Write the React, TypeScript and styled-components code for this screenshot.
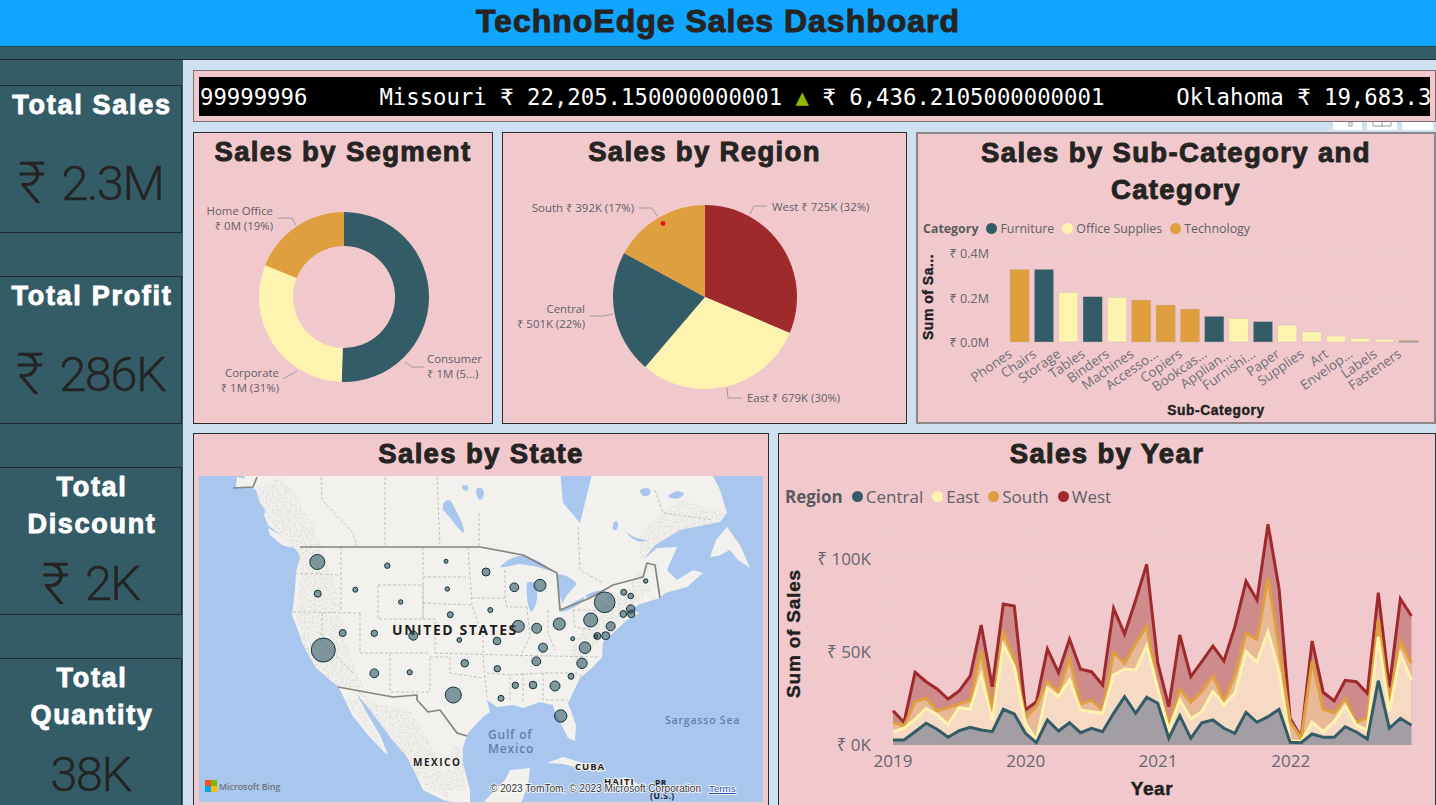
import React from "react";
import styled, { createGlobalStyle } from "styled-components";

const TEAL = "#335c67";
const YELLOW = "#fff3b0";
const ORANGE = "#e09f3e";
const RED = "#9e2a2b";
const PINK = "#f1c9cd";
const UI = '"Open Sans", "Noto Sans", sans-serif';
const HEAVY = '"Liberation Sans", Arial, sans-serif';

const Global = createGlobalStyle`
  html, body { margin: 0; padding: 0; background: #cfe0f0; }
  * { box-sizing: border-box; }
`;

const Page = styled.div`
  width: 1436px; height: 805px; overflow: hidden;
  display: flex; flex-direction: column; background: #cfe0f0;
`;
const Header = styled.header`
  height: 46px; flex: none; background: #10a5fe; padding-bottom: 3px;
  display: flex; align-items: center; justify-content: center;
  font: 700 32px ${HEAVY}; color: #252423;
  -webkit-text-stroke: 1px #252423; letter-spacing: 1px;
`;
const Band = styled.div`
  height: 14px; flex: none; background: ${TEAL};
  border-top: 1px solid #2c4a54; border-bottom: 1px solid #1e2f35;
`;
const Body = styled.div`flex: 1; min-height: 0; display: flex;`;
const Sidebar = styled.aside`
  width: 183px; flex: none; background: ${TEAL};
  padding-top: 25px; display: flex; flex-direction: column; gap: 43px;
  overflow: hidden; border-right: 1px solid #3d5f69;
`;
const KpiCard = styled.section`
  height: 148px; flex: none; display: flex; flex-direction: column;
  border-top: 1px solid #1c2e33; border-bottom: 1px solid #1c2e33; border-right: 1px solid #1c2e33;
  padding-top: 1px;
`;
const KpiTitle = styled.h2`
  margin: 0; padding-left: 3px; text-align: center; color: #fff;
  font: 700 27px/37px ${HEAVY}; -webkit-text-stroke: 0.9px #fff; letter-spacing: 1.7px;
`;
const KpiValue = styled.div`
  flex: 1; display: flex; align-items: center; justify-content: center; gap: 15px; padding-top: 10px;
  font: 300 49px Roboto, "Noto Sans", sans-serif; color: #252423; white-space: pre; letter-spacing: -1.6px;
  -webkit-text-stroke: 0.35px #252423;
`;
const Rupee = styled.span`font-size: 58px; line-height: 50px; letter-spacing: 0; -webkit-text-stroke: 0;`;
const Main = styled.main`
  flex: 1; min-width: 0; position: relative; padding: 10px 0 0 10px;
  display: flex; flex-direction: column; gap: 10px;
`;
const TickerPanel = styled.div`
  height: 52px; flex: none; background: ${PINK};
  border: 1px solid #7d6f76; padding: 6px 5px 5px 5px;
`;
const TickerTrack = styled.div`
  height: 100%; background: #000; color: #fff; overflow: hidden;
  display: flex; align-items: center; gap: 72px; padding-left: 1px; white-space: pre;
  font: 400 22.3px "DejaVu Sans Mono", "Liberation Mono", monospace;
`;
const TickerItem = styled.span`flex: none;`;
const Up = styled.span`color: #8fb800;`;
const TabStrip = styled.div`
  position: absolute; left: 1150px; top: 62px; display: flex; gap: 5px;
`;
const Tab = styled.div<{ $w: number }>`
  width: ${(p) => p.$w}px; height: 8px; background: #fff; display: flex; justify-content: center;
`;
const TopRow = styled.div`
  height: 292px; flex: none; display: grid; grid-template-columns: 300px 405px 520px; column-gap: 9px;
  margin-bottom: -1px;
`;
const BottomRow = styled.div`
  height: 380px; flex: none; display: grid; grid-template-columns: 576px 658px; column-gap: 9px;
`;
const Panel = styled.section<{ $soft?: boolean }>`
  background: ${PINK}; min-width: 0; overflow: hidden; display: flex; flex-direction: column;
  border: ${(p) => (p.$soft ? "2px solid #8d8589" : "1px solid #2d2d33")};
`;
const Title = styled.h3<{ $lh?: number }>`
  margin: 0; flex: none; text-align: center; color: #252423;
  font: 700 27.5px/${(p) => p.$lh ?? 37}px ${HEAVY};
  -webkit-text-stroke: 0.95px #252423; letter-spacing: 1.35px;
`;
const Legend = styled.div<{ $size: number; $gap: number; $h: number; $mt: number; $pl: number }>`
  flex: none; display: flex; align-items: center; height: ${(p) => p.$h}px;
  margin-top: ${(p) => p.$mt}px; padding-left: ${(p) => p.$pl}px; gap: ${(p) => p.$gap}px;
  font: 400 ${(p) => p.$size}px ${UI}; color: #5f6069;
`;
const LegendHead = styled.span`font-weight: 700; color: #5a5a5f;`;
const LegendItem = styled.span`display: inline-flex; align-items: center; gap: 3px;`;
const Dot = styled.i<{ $c: string; $d: number }>`
  display: block; width: ${(p) => p.$d}px; height: ${(p) => p.$d}px; border-radius: 50%; background: ${(p) => p.$c};
`;
const ChartSvg = styled.svg`display: block; flex: none; font-family: ${UI};`;
const MapFrame = styled.div`
  flex: none; width: 564px; height: 326px; margin: 2px 5px 0; background: #a9c6ef; overflow: hidden;
`;

function wedge(cx: number, cy: number, r: number, r0: number, a: number, b: number) {
  const p = (rad: number, t: number) => {
    const x = cx + rad * Math.sin((t * Math.PI) / 180);
    const y = cy - rad * Math.cos((t * Math.PI) / 180);
    return `${x.toFixed(2)} ${y.toFixed(2)}`;
  };
  const large = b - a > 180 ? 1 : 0;
  if (r0 === 0) return `M${cx} ${cy}L${p(r, a)}A${r} ${r} 0 ${large} 1 ${p(r, b)}Z`;
  return `M${p(r, a)}A${r} ${r} 0 ${large} 1 ${p(r, b)}L${p(r0, b)}A${r0} ${r0} 0 ${large} 0 ${p(r0, a)}Z`;
}

const LBL = { fontSize: 11.4, fill: "#5f6069" };
const LEADER = { fill: "none", stroke: "#a39a9d", strokeWidth: 1 };

function Segment() {
  return (
    <ChartSvg width={298} height={253} viewBox="194 170 298 253">
      <path d={wedge(344, 297, 85, 51, 0, 181.5)} fill={TEAL} />
      <path d={wedge(344, 297, 85, 51, 181.5, 292)} fill={YELLOW} />
      <path d={wedge(344, 297, 85, 51, 292, 360)} fill={ORANGE} />
      <polyline points="278,218 292,218 296,225" {...LEADER} />
      <polyline points="283,379 297,371" {...LEADER} />
      <polyline points="405,362 412,367 424,367" {...LEADER} />
      <text x={273} y={215} textAnchor="end" {...LBL}>Home Office</text>
      <text x={273} y={230} textAnchor="end" {...LBL}>₹ 0M (19%)</text>
      <text x={279} y={377} textAnchor="end" {...LBL}>Corporate</text>
      <text x={279} y={392} textAnchor="end" {...LBL}>₹ 1M (31%)</text>
      <text x={427} y={363} {...LBL}>Consumer</text>
      <text x={427} y={378} {...LBL}>₹ 1M (5...)</text>
    </ChartSvg>
  );
}

function Region() {
  return (
    <ChartSvg width={403} height={253} viewBox="503 170 403 253">
      <path d={wedge(705, 297, 92, 0, 0, 113)} fill={RED} />
      <path d={wedge(705, 297, 92, 0, 113, 220.5)} fill={YELLOW} />
      <path d={wedge(705, 297, 92, 0, 220.5, 298.5)} fill={TEAL} />
      <path d={wedge(705, 297, 92, 0, 298.5, 360)} fill={ORANGE} />
      <circle cx={663} cy={223.5} r={2.4} fill="#e8141c" />
      <polyline points="639,208 652,208 657,216" {...LEADER} />
      <polyline points="767,206 754,206 750,214" {...LEADER} />
      <polyline points="590,316 603,316 613,314" {...LEADER} />
      <polyline points="742,398 728,398 727,388" {...LEADER} />
      <text x={634} y={212} textAnchor="end" {...LBL}>South ₹ 392K (17%)</text>
      <text x={772} y={211} {...LBL}>West ₹ 725K (32%)</text>
      <text x={585} y={313} textAnchor="end" {...LBL}>Central</text>
      <text x={585} y={328} textAnchor="end" {...LBL}>₹ 501K (22%)</text>
      <text x={747} y={402} {...LBL}>East ₹ 679K (30%)</text>
    </ChartSvg>
  );
}

const BARS: [string, number, string][] = [
  ["Phones", 628, ORANGE], ["Chairs", 628, TEAL], ["Storage", 697, YELLOW], ["Tables", 710, TEAL],
  ["Binders", 712, YELLOW], ["Machines", 720, ORANGE], ["Accesso...", 735, ORANGE], ["Copiers", 747, ORANGE],
  ["Bookcas...", 769, TEAL], ["Applian...", 775, YELLOW], ["Furnishi...", 785, TEAL], ["Paper", 795, YELLOW],
  ["Supplies", 816, YELLOW], ["Art", 828, YELLOW], ["Envelop...", 835, YELLOW], ["Labels", 838, YELLOW], ["Fasteners", 841, ORANGE],
];

function SubCategory() {
  return (
    <ChartSvg width={516} height={184} viewBox="917 238 516 184">
      {[253, 298].map((y) => (
        <line key={y} x1={998} x2={1430} y1={y} y2={y} stroke="#d5d0cf" strokeDasharray="1 5" />
      ))}
      {BARS.map(([name, top, c], i) => {
        const x = 1009 + i * 24.33;
        const y = 60 + top / 3;
        const end = x + 3;
        return (
          <g key={name}>
            <rect x={x} y={y} width={19.3} height={342 - y} fill={c} stroke="#c9b8b8" strokeWidth={0.4} />
            <text x={end} y={356} textAnchor="end" transform={`rotate(-35 ${end} 356)`} fontSize={13.4} fill="#6f6f78">{name}</text>
          </g>
        );
      })}
      <rect x={1398} y={341} width={19.3} height={1.5} fill="#9a9da0" />
      {[["₹ 0.4M", 253], ["₹ 0.2M", 298], ["₹ 0.0M", 342]].map(([t, y]) => (
        <text key={t as string} x={988} y={(y as number) + 5} textAnchor="end" fontSize={12.6} fill="#666670">{t}</text>
      ))}
      <text transform="translate(932 340) rotate(-90)" fontSize={14} fontWeight={700} fontFamily={HEAVY} fill="#1f1f1f" stroke="#1f1f1f" strokeWidth={0.4} letterSpacing={0.5}>Sum of Sa...</text>
      <text x={1215} y={415} textAnchor="middle" fontSize={13.8} fontWeight={700} fontFamily={HEAVY} fill="#1f1f1f" stroke="#1f1f1f" strokeWidth={0.4} letterSpacing={0.6}>Sub-Category</text>
    </ChartSvg>
  );
}

const conv = (a: number[]) => a.map((v, i) => (i < 19 ? 470 + v / 3 : 500 + v / 3));
const WEST = conv([722,757,607,635,657,687,663,618,465,650,402,408,720,695,537,608,507,598,605,555,325,402,300,193,488,620,405,530,485,438,483,380,244,300,73,265,655,712,423,577,603,541,545,580,278,562,296,348]);
const SOUTH = conv([757,768,695,685,722,713,702,690,540,728,482,570,745,708,633,665,565,703,690,630,457,490,430,378,560,675,567,607,575,527,600,525,400,418,235,440,665,715,483,628,638,595,667,653,360,607,425,490]);
const EAST = conv([785,775,748,715,735,763,713,718,615,752,525,590,760,810,655,680,630,720,725,640,525,507,510,437,565,690,600,657,635,575,615,580,455,487,395,515,722,725,667,695,665,617,675,690,410,635,462,540]);
const CENTRAL = conv([810,810,785,760,778,802,782,772,780,785,718,732,790,818,750,783,758,788,775,695,640,590,640,592,610,715,647,715,668,660,685,700,637,667,650,628,727,728,702,712,712,680,696,717,542,685,655,676]);

const line = (ys: number[]) => ys.map((y, i) => `${(893 + i * 11.03).toFixed(1)},${y.toFixed(1)}`).join(" ");
const area = (ys: number[]) => `893,745 ${line(ys)} 1411.4,745`;

function YearChart() {
  const axis = { fontSize: 17, fill: "#666670" };
  return (
    <ChartSvg width={656} height={292} viewBox="779 513 656 292">
      {[559, 652, 745].map((y) => (
        <line key={y} x1={881} x2={1424} y1={y} y2={y} stroke="#cfd2d2" strokeDasharray="1 5" />
      ))}
      {[893, 1025.7, 1158, 1290.7].map((x) => (
        <line key={x} x1={x} x2={x} y1={522} y2={745} stroke="#cfd2d2" strokeDasharray="1 5" />
      ))}
      <polygon points={area(WEST)} fill="#cf8a8c" />
      <polygon points={area(SOUTH)} fill="#e9b997" />
      <polygon points={area(EAST)} fill="#f6dac3" />
      <polygon points={area(CENTRAL)} fill="#a39ea4" />
      <polyline points={line(WEST)} fill="none" stroke={RED} strokeWidth={3} />
      <polyline points={line(SOUTH)} fill="none" stroke={ORANGE} strokeWidth={3} />
      <polyline points={line(EAST)} fill="none" stroke={YELLOW} strokeWidth={3} />
      <polyline points={line(CENTRAL)} fill="none" stroke={TEAL} strokeWidth={3} />
      <text x={871} y={565} textAnchor="end" {...axis}>₹ 100K</text>
      <text x={871} y={658} textAnchor="end" {...axis}>₹ 50K</text>
      <text x={871} y={751} textAnchor="end" {...axis}>₹ 0K</text>
      {[["2019", 893], ["2020", 1025.7], ["2021", 1158], ["2022", 1290.7]].map(([t, x]) => (
        <text key={t as string} x={x as number} y={767} textAnchor="middle" {...axis}>{t}</text>
      ))}
      <text transform="translate(800 698) rotate(-90)" fontSize={19} fontWeight={700} fontFamily={HEAVY} fill="#1f1f1f" stroke="#1f1f1f" strokeWidth={0.4} letterSpacing={0.8}>Sum of Sales</text>
      <text x={1152} y={795} textAnchor="middle" fontSize={19} fontWeight={700} fontFamily={HEAVY} fill="#1f1f1f" stroke="#1f1f1f" strokeWidth={0.5} letterSpacing={0.6}>Year</text>
    </ChartSvg>
  );
}

const LAND = "M240 470L250 486L256 490L262 510L268 525L280 535L298 552L300 558L296 572L295 590L292 615L297 628L303 645L316 668L330 680L338 686L345 700L352 715L368 735L384 752L388 755L380 735L368 715L356 693L370 710L390 737L407 757L417 777L423 790L443 800L470 806L470 790L463 763L463 747L468 733L483 717L490 712L487 700L497 707L513 705L523 708L540 702L553 705L555 712L568 738L575 741L576 725L568 703L580 678L593 667L602 657L603 642L613 633L627 620L640 613L630 610L640 604L660 598L665 593L687 587L703 573L693 570L677 580L667 570L677 547L657 548L643 560L655 545L680 530L720 522L727 513L720 490L710 470L593 470L580 523L575 517L563 503L560 470Z";
const STATES = [
  "321,477 322,500 353,533 357,547", "385,477 385,547", "437,477 440,547", "479,513 479,547",
  "341,547 341,612", "295,573 341,575", "293,612 360,613", "322,613 322,643 353,673", "360,613 360,653 430,653",
  "378,585 423,585 423,619 378,619 378,585", "423,619 435,619 435,653", "390,653 390,692 430,692 430,657",
  "430,657 450,657 450,673 483,678", "423,547 423,619", "423,577 469,577", "423,603 472,605",
  "468,547 472,605 483,637 483,657 487,697", "435,653 503,655 600,657", "472,598 505,598 507,607 527,607",
  "505,570 505,598", "487,673 510,675 510,700", "523,673 523,702", "543,673 543,700 567,700", "510,675 543,673 577,673 590,683",
  "527,607 530,637 520,657", "548,610 548,633 555,650", "573,610 575,627 593,630", "573,610 597,610 615,605",
  "578,527 580,570 603,583", "655,490 663,513 713,520",
];
const BUBBLES = [
  [317.3,562,7.5],[387.3,565.7,2.7],[446,561.3,2],[486,572,4],[317.7,593.7,3.5],[355.3,589.7,2.5],[447.3,589,2.2],
  [400.7,602,2.2],[450.3,614.7,3],[490.3,610,2.5],[342.7,633,3.5],[374.3,633.3,3.2],[413.3,635.7,4.5],[459.3,640,2.4],
  [323.3,650,12],[464.7,663.3,3.8],[374.3,673.3,4.4],[409.7,672.3,2.6],[453.3,695,8],[514.3,587.3,4.4],[540,585.3,6],
  [518.3,626.3,6],[536.7,628.3,5],[559.3,624,6],[590.7,620,7],[604.7,602.3,10.3],[610.7,626.3,4.5],[497,641,3.8],
  [543,647.7,4.5],[572.7,638.7,2],[585,647.7,5.8],[597.3,636,3.5],[596,636.5,1.8],[605.7,635.7,4],[536.3,661.3,4.4],
  [497.3,668.7,3.2],[582,663.3,5.2],[571,676.3,3],[515.3,685.3,3.2],[533,685,3.8],[555,686,5],[501,698.3,3],[560.7,716,6.2],
  [623.7,592.3,3],[630.7,596,2.8],[645.7,581,2.2],[630.7,609,4.2],[623.3,614,3.4],[631.3,614,3.7],
];
const WATER = [
  "M500 567C510 556 523 553 531 558C540 562 548 566 553 572C540 567 530 565 520 564C512 565 505 568 500 567Z",
  "M527 583C531 580 536 582 537 590C538 600 535 610 531 612C527 606 526 592 527 583Z",
  "M556 574C566 574 574 580 577 584C572 590 566 594 563 603C560 600 558 588 556 574Z",
  "M558 612C566 606 576 601 584 597C586 600 578 606 566 611Z",
  "M586 595C592 591 600 590 604 591C600 595 592 597 586 598Z",
  "M443 504C447 497 452 500 454 507C458 515 464 524 464 533C458 530 450 516 443 510Z",
  "M462 486C466 484 470 486 468 490C465 492 462 490 462 486Z",
  "M476 490C480 484 486 490 483 498C480 502 476 498 476 490Z",
  "M640 490C646 486 652 488 650 494C646 498 640 496 640 490Z",
  "M668 496C674 490 682 490 684 494C680 500 672 500 668 496Z",
  "M614 522C618 518 620 526 616 530C612 532 612 526 614 522Z",
  "M626 532C634 538 642 540 648 540C640 544 632 540 626 532Z",
  "M256 500C262 504 268 512 264 514C258 510 254 506 256 500Z",
];
const ISLANDS = [
  "M710 557L716 540L727 527L740 545L750 568L738 560L730 550L718 556Z",
  "M547 763L563 757L580 762L603 772L590 771L563 764Z",
  "M613 780L625 777L642 786L630 788L615 785Z",
  "M495 790L505 780L510 770L530 768L528 785L520 806L480 806Z",
  "M268 528L285 538L293 548L282 545L270 535Z",
  "M237 477L253 480L252 487L236 488Z",
];
const RELIEF = "M256 490L262 510L280 535L298 552L300 575L296 615L303 645L316 668L338 686L356 690L370 705L345 640L340 600L320 540L300 500L280 477Z M345 700L384 752L375 730L356 700Z M358 700L390 737L417 777L430 790L450 800L440 760L410 710Z M445 790L465 790L465 750L455 745L445 760Z M640 560L680 530L720 522L725 513L680 500L640 530Z M600 600L625 590L640 570L650 590L620 620L590 650L580 670L570 650Z";

function MapView() {
  return (
    <ChartSvg width={564} height={326} viewBox="199 476 564 326">
      <defs>
        <filter id="relief" x="0" y="0" width="100%" height="100%">
          <feTurbulence type="fractalNoise" baseFrequency="0.5" numOctaves={2} seed={4} result="n" />
          <feColorMatrix in="n" type="matrix" values="0 0 0 0 0.6  0 0 0 0 0.59  0 0 0 0 0.56  2 0 0 0 -0.85" result="g" />
          <feComposite in="g" in2="SourceGraphic" operator="in" />
          <feGaussianBlur stdDeviation="0.35" />
        </filter>
        <filter id="soft"><feGaussianBlur stdDeviation="0.6" /></filter>
      </defs>
      <rect x={199} y={476} width={564} height={326} fill="#a9c6ef" />
      <g filter="url(#soft)">
        <path d={LAND} fill="#f2f1ed" />
        {ISLANDS.map((d) => <path key={d} d={d} fill="#f2f1ed" />)}
        {WATER.map((d) => <path key={d} d={d} fill="#a9c6ef" />)}
      </g>
      <path d={RELIEF} fill="#fff" filter="url(#relief)" opacity={0.75} />
      {STATES.map((p) => <polyline key={p} points={p} fill="none" stroke="#b0aea8" strokeWidth={0.7} strokeDasharray="3 2" />)}
      <g fill="none" stroke="#85847f" strokeWidth={1.7} strokeLinejoin="round" filter="url(#soft)">
        <polyline points="233,488 253,487 257,477" />
        <polyline points="300,547 480,547 523,555 557,573 560,610 590,598 613,585 643,577 647,563 655,565 660,598" />
        <polyline points="338,687 393,697 417,695 417,700 428,712 440,710 457,733 467,736" />
      </g>
      <g fontFamily={UI} fontWeight={700} fill="#1d1d1d" stroke="#f2f1ed" strokeWidth={2} style={{ paintOrder: "stroke" }}>
        <text x={392} y={635} fontSize={14} letterSpacing={1.55}>UNITED STATES</text>
        <text x={413} y={766} fontSize={10} letterSpacing={1.5}>MEXICO</text>
        <text x={575} y={770} fontSize={9.5} letterSpacing={1}>CUBA</text>
        <text x={604} y={785} fontSize={9.5} letterSpacing={1}>HAITI</text>
        <text x={655} y={786} fontSize={8.5} letterSpacing={0.5} stroke="none">PR</text>
        <text x={650} y={799} fontSize={8.5} letterSpacing={0.5} stroke="none">(U.S.)</text>
      </g>
      <g fontFamily={UI} fontWeight={600} fill="#5f7fae">
        <text x={488} y={739} fontSize={12} letterSpacing={0.8}>Gulf of</text>
        <text x={488} y={753} fontSize={12} letterSpacing={0.8}>Mexico</text>
        <text x={665} y={724} fontSize={10.5} letterSpacing={0.8}>Sargasso Sea</text>
      </g>
      {BUBBLES.map(([x, y, r]) => (
        <circle key={`${x}-${y}`} cx={x} cy={y} r={r} fill="#335c67" fillOpacity={0.6} stroke="#13323d" strokeWidth={1} />
      ))}
      <rect x={205} y={780} width={6} height={6} fill="#f25022" />
      <rect x={211} y={780} width={6} height={6} fill="#7fba00" />
      <rect x={205} y={786} width={6} height={6} fill="#00a4ef" />
      <rect x={211} y={786} width={6} height={6} fill="#ffb900" />
      <text x={219} y={790} fontFamily={UI} fontSize={8.8} fontWeight={600} fill="#6f7278">Microsoft Bing</text>
      <text x={490} y={792} fontFamily='"Liberation Sans", sans-serif' fontSize={10.1} fill="#333" stroke="#fff" strokeWidth={1.4} style={{ paintOrder: "stroke" }}>© 2023 TomTom, © 2023 Microsoft Corporation</text>
      <text x={709} y={792} fontFamily='"Liberation Sans", sans-serif' fontSize={9.8} fill="#2a4fb0" textDecoration="underline" stroke="#fff" strokeWidth={1.4} style={{ paintOrder: "stroke" }}>Terms</text>
    </ChartSvg>
  );
}

export default function App() {
  return (
    <Page>
      <Global />
      <Header>TechnoEdge Sales Dashboard</Header>
      <Band />
      <Body>
        <Sidebar>
          <KpiCard><KpiTitle>Total Sales</KpiTitle><KpiValue><Rupee>₹</Rupee>2.3M</KpiValue></KpiCard>
          <KpiCard><KpiTitle>Total Profit</KpiTitle><KpiValue><Rupee>₹</Rupee>286K</KpiValue></KpiCard>
          <KpiCard><KpiTitle>Total<br />Discount</KpiTitle><KpiValue><Rupee>₹</Rupee>2K</KpiValue></KpiCard>
          <KpiCard><KpiTitle>Total<br />Quantity</KpiTitle><KpiValue>38K</KpiValue></KpiCard>
        </Sidebar>
        <Main>
          <TickerPanel>
            <TickerTrack>
              <TickerItem>99999996</TickerItem>
              <TickerItem>Missouri ₹ 22,205.150000000001 <Up>▲</Up> ₹ 6,436.2105000000001</TickerItem>
              <TickerItem>Oklahoma ₹ 19,683.3</TickerItem>
            </TickerTrack>
          </TickerPanel>
          <TabStrip>
            <Tab $w={29}><svg width="11" height="5" viewBox="0 0 11 5"><rect x="7" y="0" width="3" height="4" fill="none" stroke="#9a9a9a" /></svg></Tab>
            <Tab $w={30}><svg width="20" height="5" viewBox="0 0 20 5"><path d="M1 0V4H19V0M10 0V4" fill="none" stroke="#9a9a9a" /></svg></Tab>
            <Tab $w={31} />
          </TabStrip>
          <TopRow>
            <Panel><Title>Sales by Segment</Title><Segment /></Panel>
            <Panel><Title>Sales by Region</Title><Region /></Panel>
            <Panel $soft>
              <Title>Sales by Sub-Category and<br />Category</Title>
              <Legend $size={12.4} $gap={8} $h={20} $mt={10} $pl={5}>
                <LegendHead>Category</LegendHead>
                <LegendItem><Dot $c={TEAL} $d={11} />Furniture</LegendItem>
                <LegendItem><Dot $c={YELLOW} $d={11} />Office Supplies</LegendItem>
                <LegendItem><Dot $c={ORANGE} $d={11} />Technology</LegendItem>
              </Legend>
              <SubCategory />
            </Panel>
          </TopRow>
          <BottomRow>
            <Panel>
              <Title $lh={40}>Sales by State</Title>
              <MapFrame><MapView /></MapFrame>
            </Panel>
            <Panel>
              <Title $lh={40}>Sales by Year</Title>
              <Legend $size={17} $gap={9} $h={34} $mt={5} $pl={6}>
                <LegendHead>Region</LegendHead>
                <LegendItem><Dot $c={TEAL} $d={11} />Central</LegendItem>
                <LegendItem><Dot $c={YELLOW} $d={11} />East</LegendItem>
                <LegendItem><Dot $c={ORANGE} $d={11} />South</LegendItem>
                <LegendItem><Dot $c={RED} $d={11} />West</LegendItem>
              </Legend>
              <YearChart />
            </Panel>
          </BottomRow>
        </Main>
      </Body>
    </Page>
  );
}
